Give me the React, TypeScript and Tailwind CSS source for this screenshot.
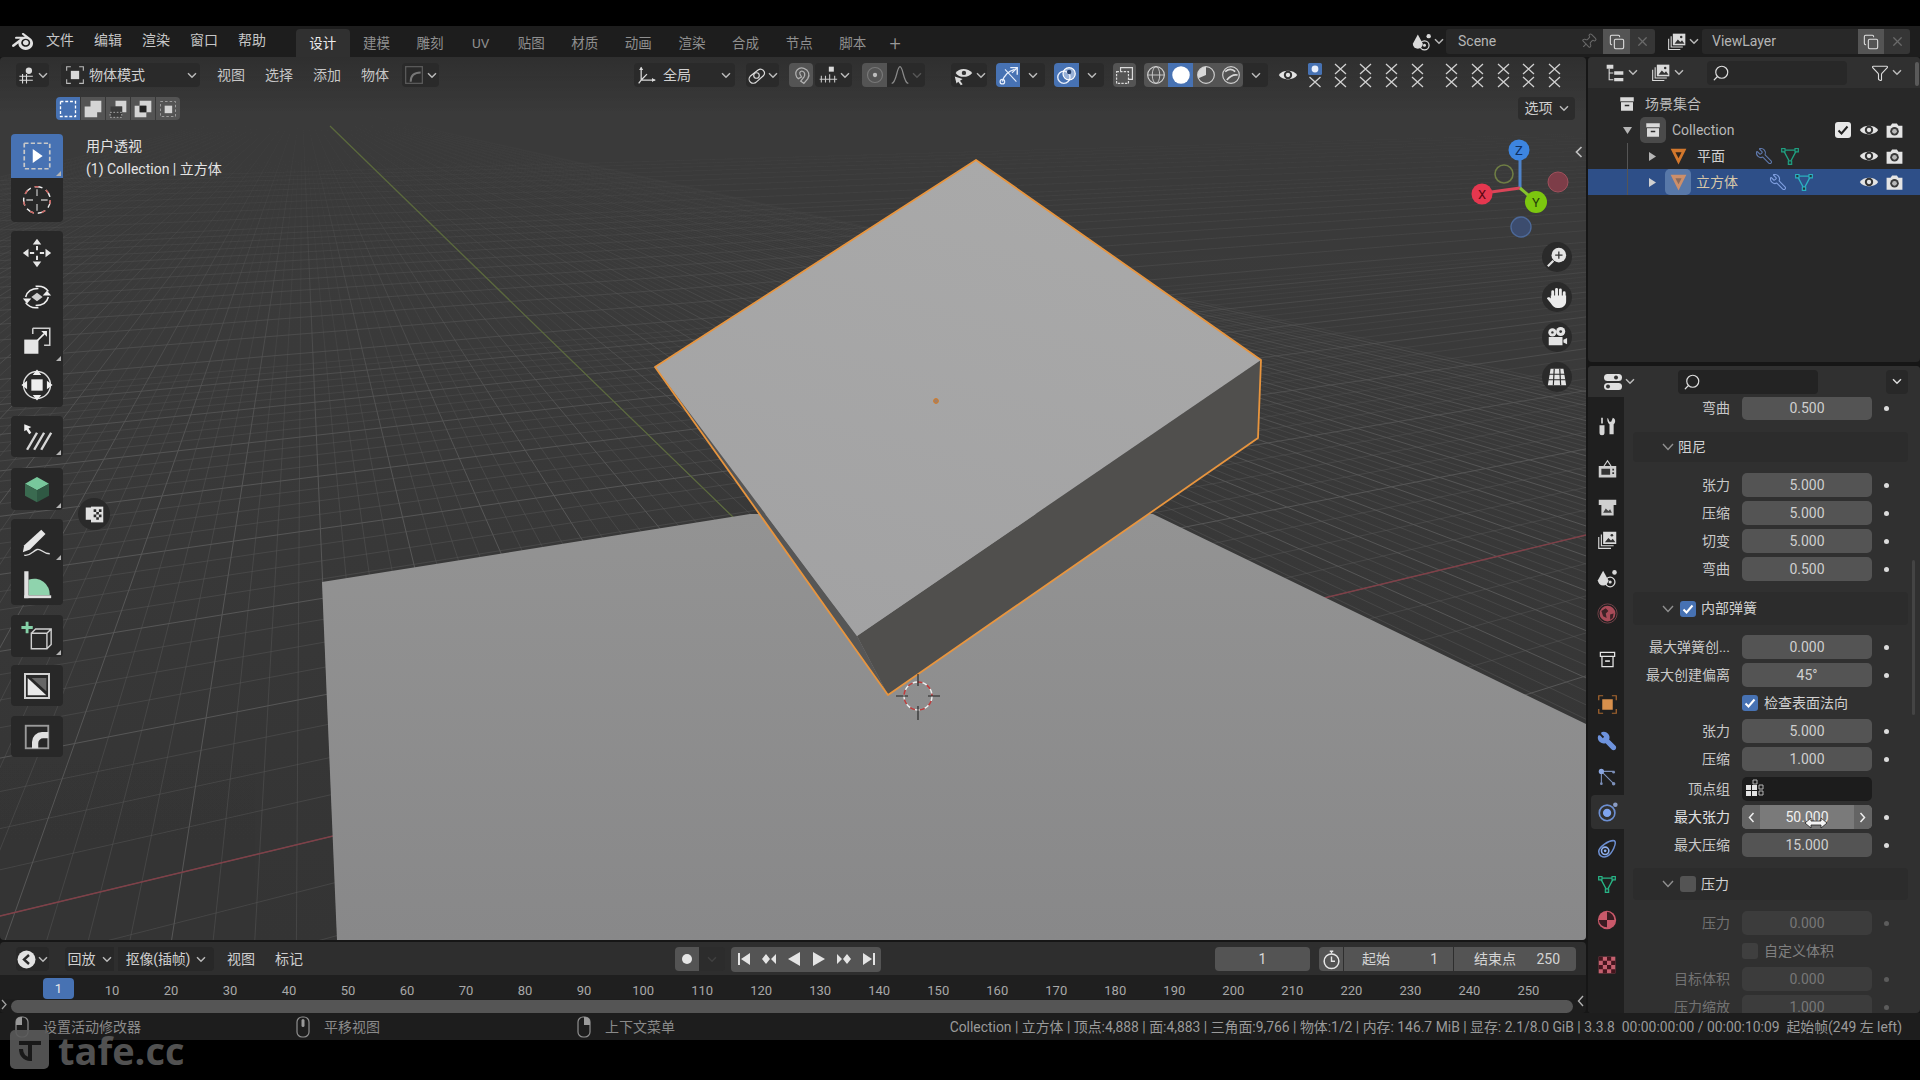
import React from "react";
import { Search, Funnel, Copy, Pin, X, Wrench } from "lucide-react";
import { SiBlender } from "react-icons/si";

const W = "#dadada";
type P = { s?: number; children?: React.ReactNode; className?: string; vb?: number };
const Svg = ({ s = 18, vb = 24, children, className }: P) => (
  <svg width={s} height={s} viewBox={`0 0 ${vb} ${vb}`} fill="none" className={`shrink-0 ${className ?? ""}`}>
    {children}
  </svg>
);
const Chev = ({ c = "#b8b8b8" }: { c?: string }) => (
  <svg width="10" height="7" viewBox="0 0 10 7" fill="none" className="shrink-0">
    <path d="M1 1.2l4 4 4-4" stroke={c} strokeWidth="1.5" />
  </svg>
);
const Tri = ({ c = "#b5b5b5", down = false }: { c?: string; down?: boolean }) => (
  <svg width="9" height="9" viewBox="0 0 9 9" className="shrink-0">
    <path d={down ? "M0 1h9L4.5 8z" : "M1 0l7 4.5L1 9z"} fill={c} />
  </svg>
);
const View3D = () => (
  <Svg s={19}>
    <circle cx="15" cy="6" r="4" fill={W} />
    <path d="M12 10v12M3 13h17M3 18h17M7 10v12" stroke={W} strokeWidth="1.4" />
  </Svg>
);
const ModeObj = () => (
  <Svg s={20}>
    <rect x="7" y="7" width="10" height="10" fill={W} />
    <path d="M2 7V2h5M17 2h5v5M22 17v5h-5M7 22H2v-5" stroke="#bbb" strokeWidth="1.3" />
  </Svg>
);
const Outliner = () => (
  <Svg s={20}>
    <path d="M2 2h8v5H2z" fill={W} />
    <path d="M5 7v13h5M5 12h5" stroke={W} strokeWidth="1.3" />
    <path d="M11 10h11v4H11zM11 18h11v4H11z" fill={W} />
  </Svg>
);
const ViewLayerIc = ({ s = 20 }: { s?: number }) => (
  <Svg s={s}>
    <rect x="7" y="2" width="15" height="14" fill={W} />
    <path d="M9 14l4-5 3 3 2-2 3 4z" fill="#333" />
    <circle cx="17" cy="6" r="1.5" fill="#333" />
    <path d="M5 5v13h14M2 8v13h14" stroke={W} strokeWidth="1.3" />
  </Svg>
);
const SceneIc = ({ s = 20 }: { s?: number }) => (
  <Svg s={s}>
    <path d="M7 3l6 11a5 5 0 01-12 0z" fill={W} />
    <circle cx="20" cy="5" r="2.6" fill={W} />
    <circle cx="15" cy="16" r="5.5" stroke={W} strokeWidth="1.5" />
    <circle cx="15" cy="16" r="1.8" fill={W} />
  </Svg>
);
const Box = ({ s = 18, c = W, dark = "#2a2a2a" }: { s?: number; c?: string; dark?: string }) => (
  <Svg s={s}>
    <path d="M3 3h18v6H3z" fill={c} />
    <path d="M4 9h16v12H4z" fill={c} />
    <path d="M9 13h6v2H9z" fill={dark} />
    <path d="M3 9h18" stroke={dark} strokeWidth="1" />
  </Svg>
);
const BoxOutline = () => (
  <Svg s={19}>
    <path d="M3 3h18v5H3zM5 8v13h14V8" stroke="#e4e4e4" strokeWidth="1.6" />
    <path d="M9 13h6v2H9z" fill="#e4e4e4" />
  </Svg>
);
const MeshObj = ({ dim }: { dim?: boolean }) => (
  <Svg s={21}>
    <path d="M3 3h18L12 21z" fill={dim ? "#e0935f" : "#d2772c"} opacity={dim ? 0.85 : 1} />
    <path d="M8.5 7h7L12 14z" fill={dim ? "#8a6a5a" : "#30241b"} />
  </Svg>
);
const MeshData = ({ c }: { c: string }) => (
  <Svg s={20}>
    <path d="M4 5h16L12 20z" stroke={c} strokeWidth="1.6" />
    <path d="M2 3h4v4H2zM18 3h4v4h-4zM10 18h4v4h-4z" fill="#203a38" stroke={c} strokeWidth="1.4" />
  </Svg>
);
const EyeIc = () => (
  <Svg s={20}>
    <path d="M1 12c4-7 18-7 22 0-4 7-18 7-22 0z" fill="#e4e4e4" />
    <circle cx="12" cy="12" r="5" fill="#333" />
    <circle cx="12" cy="12" r="2.6" fill="#e4e4e4" />
  </Svg>
);
const CamIc = () => (
  <Svg s={19}>
    <path d="M2 6h5l2-3h6l2 3h5v15H2z" fill="#e4e4e4" />
    <circle cx="12" cy="13" r="5.4" fill="#3a3a3a" />
    <circle cx="12" cy="13" r="3" fill="#b8b8b8" />
  </Svg>
);
const Check = ({ on, size = 16, blue }: { on: boolean; size?: number; blue?: boolean }) => (
  <span className={`flex items-center justify-center shrink-0 rounded-[3px] size-[16px] ${blue ? "bg-[#4772b3]" : on ? "bg-[#e8e8e8]" : "bg-[#545454]"}`}>
    {on && (
      <svg width={size - 2} height={size - 2} viewBox="0 0 14 14" fill="none">
        <path d="M2.5 7.5l3 3 6-7" stroke={blue ? "#fff" : "#222"} strokeWidth="2" />
      </svg>
    )}
  </span>
);
const XX = ({ cn }: { cn: string }) => (
  <svg width="13" height="25" viewBox="0 0 13 25" className={`shrink-0 ${cn}`}>
    <path d="M1 1l11 10M12 1L1 11M1 14l11 10M12 14L1 24" stroke="#d0d0d0" strokeWidth="1.3" />
  </svg>
);

const tabs = ["设计", "建模", "雕刻", "UV", "贴图", "材质", "动画", "渲染", "合成", "节点", "脚本"];
const menus = ["文件", "编辑", "渲染", "窗口", "帮助"];

function TopBar() {
  return (
    <div className="h-[31px] bg-[#1d1d1d] flex items-center shrink-0">
      <div className="w-[36px] pl-[12px]">
        <SiBlender size={21} color="#e2e2e2" />
      </div>
      {menus.map((m) => (
        <div key={m} className="w-[48px] text-center text-[14px] text-[#c6c6c6] pb-[2px]">
          {m}
        </div>
      ))}
      <div className="flex self-end h-[28px] ml-[20px]">
        {tabs.map((t, i) => (
          <div key={t} className={`flex items-center justify-center text-[13.5px] rounded-t-[4px] ${t === "UV" ? "w-[47.6px]" : "w-[53.6px]"} ${i === 0 ? "bg-[#303030] text-[#ececec]" : "text-[#8f8f8f]"}`}>
            {t}
          </div>
        ))}
        <div className="ml-[10px] flex items-center text-[20px] font-light text-[#999] leading-none">+</div>
      </div>
      <div className="flex-1" />
      <div className="w-[36px] flex items-center gap-[2px] justify-center">
        <SceneIc />
        <Chev />
      </div>
      <div className="w-[157px] h-[25px] bg-[#282828] flex items-center pl-[12px] pr-[2px] text-[14px] text-[#b5b5b5] rounded-l-[3px] justify-between">
        Scene
        <Pin size={17} strokeWidth={1.5} color="#686868" className="rotate-45 mr-[4px]" />
      </div>
      <div className="w-[27px] h-[25px] bg-[#545454] flex items-center justify-center">
        <Copy size={16} strokeWidth={1.6} color="#e0e0e0" />
      </div>
      <div className="w-[25px] h-[25px] bg-[#363636] flex items-center justify-center rounded-r-[3px]">
        <X size={15} color="#6a6a6a" />
      </div>
      <div className="w-[39px] ml-[8px] flex items-center gap-[2px] justify-center">
        <ViewLayerIc />
        <Chev />
      </div>
      <div className="w-[156px] h-[25px] bg-[#282828] flex items-center pl-[10px] text-[14px] text-[#b5b5b5] rounded-l-[3px]">ViewLayer</div>
      <div className="w-[26px] h-[25px] bg-[#545454] flex items-center justify-center">
        <Copy size={16} strokeWidth={1.6} color="#e0e0e0" />
      </div>
      <div className="w-[26px] h-[25px] bg-[#363636] flex items-center justify-center rounded-r-[3px] mr-[10px]">
        <X size={15} color="#6a6a6a" />
      </div>
    </div>
  );
}

const Scene3D = () => {
  const vp1 = [3494, 77];
  const vp2 = [302, 100];
  const a: { y: number; o: number }[] = [];
  for (let i = -12; i < 160; i++) {
    if (i > 80 && i % 8 !== 0) continue;
    if (i > 30 && i % 4 !== 0) continue;
    a.push({ y: 100 + 816 / (1 + i * 0.06), o: i % 4 === 0 ? 1 : 0.5 });
  }
  const b: { x: number; o: number }[] = [];
  for (let i = -100; i < 70; i++) b.push({ x: 1170 + i * 41.6, o: i % 4 === 0 ? 1 : 0.5 });
  return (
    <svg className="absolute inset-0" width="1586" height="883" viewBox="0 57 1586 883">
      <defs>
        <linearGradient id="pl" x1="0" y1="514" x2="0" y2="940" gradientUnits="userSpaceOnUse">
          <stop offset="0" stopColor="#939393" />
          <stop offset="1" stopColor="#888889" />
        </linearGradient>
        <linearGradient id="tp" x1="976" y1="160" x2="855" y2="637" gradientUnits="userSpaceOnUse">
          <stop offset="0" stopColor="#a9a9a9" />
          <stop offset="1" stopColor="#a2a2a3" />
        </linearGradient>
        <linearGradient id="fd" x1="0" y1="110" x2="0" y2="480" gradientUnits="userSpaceOnUse">
          <stop offset="0" stopColor="#565656" stopOpacity="0" />
          <stop offset="1" stopColor="#565656" stopOpacity="1" />
        </linearGradient>
      </defs>
      {a.map((l, i) => (
        <line key={i} x1={0} y1={l.y} x2={vp1[0]} y2={vp1[1]} stroke="url(#fd)" strokeWidth={1} opacity={l.o} />
      ))}
      {b.map((l, i) => (
        <line key={i} x1={l.x} y1={940} x2={vp2[0]} y2={vp2[1]} stroke="url(#fd)" strokeWidth={1} opacity={l.o} />
      ))}
      <line x1={0} y1={916} x2={1586} y2={535} stroke="#804048" strokeWidth={1.4} />
      <line x1={330} y1={126} x2={735} y2={519} stroke="#5c6b3c" strokeWidth={1.2} />
      <path d="M322 582L750 514H1153L1586 724V940H337z" fill="url(#pl)" />
      <path d="M655 367L857 636 888 695z" fill="#565656" />
      <path d="M1261 360L857 636 888 695 1258 438z" fill="#504f4d" />
      <path d="M976 160L1261 360 857 636 655 367z" fill="url(#tp)" />
      <path d="M976 160L1261 360 1258 438 888 695 655 367z" fill="none" stroke="#e8953e" strokeWidth={1.8} strokeLinejoin="round" />
      <circle cx="936" cy="401" r="2.4" fill="#a0806a" stroke="#d87a20" strokeWidth="1" />
      <ellipse cx="918" cy="696" rx="14" ry="14" fill="none" stroke="#f0f0f0" strokeWidth="1.4" strokeDasharray="5 5" />
      <ellipse cx="918" cy="696" rx="14" ry="14" fill="none" stroke="#c23a3a" strokeWidth="1.4" strokeDasharray="5 5" strokeDashoffset="5" />
      <path d="M918 674v12M918 706v14M896 696h12M928 696h12" stroke="#222" strokeWidth="1.1" />
    </svg>
  );
};

const HBtn = ({ cn, children }: { cn: string; children: React.ReactNode }) => (
  <div className={`h-[24px] flex items-center justify-center shrink-0 ${cn}`}>{children}</div>
);

function ViewHeader() {
  return (
    <div className="flex items-center h-[24px] mt-[6px]">
      <HBtn cn="ml-[16px] w-[33px] gap-[2px] bg-[#2a2a2a] rounded-[4px]">
        <View3D />
        <Chev />
      </HBtn>
      <HBtn cn="ml-[12px] w-[139px] bg-[#2a2a2a] rounded-[4px] pl-[4px] pr-[3px] text-[14px] text-[#cfcfcf]">
        <ModeObj />
        <span className="ml-[4px] flex-1">物体模式</span>
        <Chev />
      </HBtn>
      <div className="ml-[7px] flex">
        {["视图", "选择", "添加", "物体"].map((m) => (
          <div key={m} className="w-[48px] text-center text-[14px] text-[#c6c6c6]">
            {m}
          </div>
        ))}
      </div>
      <HBtn cn="ml-[3px] w-[37px] gap-[3px] bg-[#2a2a2a] rounded-[4px]">
        <Svg s={20}>
          <rect x="2" y="2" width="20" height="20" stroke="#5c5c5c" strokeWidth="1.5" />
          <path d="M8 20c0-7 4-11 12-11" stroke="#777" strokeWidth="2.4" />
        </Svg>
        <Chev />
      </HBtn>
      <HBtn cn="ml-[195px] w-[101px] bg-[#2a2a2a] rounded-[4px] pl-[3px] pr-[4px] text-[14px] text-[#d0d0d0]">
        <Svg s={20}>
          <path d="M5 3v15h17M5 18l-3 4M5 18L12 11" stroke={W} strokeWidth="1.5" />
          <path d="M5 2l-2.5 4h5zM22 18l-4-2.5v5z" fill={W} />
        </Svg>
        <span className="ml-[6px] flex-1">全局</span>
        <Chev />
      </HBtn>
      <HBtn cn="ml-[11px] w-[33px] gap-[2px] bg-[#2a2a2a] rounded-[4px]">
        <Svg s={19}>
          <path d="M14 5a5 5 0 017 7l-9 8a5 5 0 01-8-7z" stroke={W} strokeWidth="1.5" />
          <circle cx="12" cy="12" r="3.5" fill="#2a2a2a" stroke={W} strokeWidth="1.5" />
        </Svg>
        <Chev />
      </HBtn>
      <HBtn cn="ml-[10px] w-[24px] bg-[#545454] rounded-[4px]">
        <Svg s={19}>
          <path d="M6 14C2 6 9 1 15 3c6 2 8 8 5 13l-5 6-4-3 4-5c2-3 1-6-1-7s-5 0-4 3l2 4-4 2z" stroke="#b0b0b0" strokeWidth="1.6" />
        </Svg>
      </HBtn>
      <HBtn cn="ml-[2px] w-[37px] gap-[2px] bg-[#2a2a2a] rounded-[4px]">
        <Svg s={20}>
          <rect x="13" y="2" width="6" height="6" fill={W} />
          <path d="M2 17h21M4 13v8M9 13v8M14 11v10M20 13v8" stroke="#c6c6c6" strokeWidth="1.3" />
        </Svg>
        <Chev />
      </HBtn>
      <HBtn cn="ml-[10px] w-[25px] bg-[#545454] rounded-l-[4px]">
        <Svg s={20}>
          <circle cx="12" cy="12" r="9" stroke="#787878" strokeWidth="1.4" />
          <circle cx="12" cy="12" r="2.6" fill="#bdbdbd" />
        </Svg>
      </HBtn>
      <HBtn cn="w-[38px] gap-[2px] bg-[#2a2a2a] rounded-r-[4px]">
        <Svg s={20}>
          <path d="M2 22c6 0 6-20 10-20s4 20 10 20" stroke="#8a8a8a" strokeWidth="1.5" />
        </Svg>
        <Chev c="#555" />
      </HBtn>
      <HBtn cn="ml-[26px] w-[36px] gap-[2px] bg-[#2a2a2a] rounded-[4px]">
        <Svg s={21}>
          <path d="M3 9c4-6 14-6 19 0-5 6-15 6-19 0z" fill={W} />
          <circle cx="12.5" cy="9" r="2.5" fill="#333" />
          <path d="M2 13l9 3-3 2 3 4-2 1-3-4-2 2z" fill={W} />
        </Svg>
        <Chev />
      </HBtn>
      <HBtn cn="ml-[9px] w-[24px] bg-[#4772b3] rounded-l-[4px]">
        <Svg s={21}>
          <path d="M5 19C7 11 12 7 19 5" stroke="#e6eefb" strokeWidth="1.6" />
          <circle cx="5" cy="19" r="2.6" stroke="#e6eefb" strokeWidth="1.4" />
          <path d="M14 3h8v8M22 3l-6 6" stroke="#e6eefb" strokeWidth="1.6" />
          <path d="M8 5l13 14" stroke="#e6eefb" strokeWidth="1.2" />
        </Svg>
      </HBtn>
      <HBtn cn="w-[25px] bg-[#2a2a2a] rounded-r-[4px]">
        <Chev />
      </HBtn>
      <HBtn cn="ml-[9px] w-[25px] bg-[#4772b3] rounded-l-[4px]">
        <Svg s={21}>
          <circle cx="9" cy="14" r="7" stroke="#e8eefb" strokeWidth="1.6" />
          <circle cx="15" cy="10" r="7" fill="#e8eefb" fillOpacity=".5" stroke="#fff" strokeWidth="1.4" />
          <circle cx="15" cy="8" r="2.5" fill="#26406c" />
        </Svg>
      </HBtn>
      <HBtn cn="w-[25px] bg-[#2a2a2a] rounded-r-[4px]">
        <Chev />
      </HBtn>
      <HBtn cn="ml-[9px] w-[23px] bg-[#545454] rounded-[4px]">
        <Svg s={19}>
          <path d="M7 7V2h15v15h-5" stroke="#dadada" strokeWidth="1.5" />
          <rect x="2" y="7" width="15" height="15" stroke="#dadada" strokeWidth="1.5" strokeDasharray="3 1.5" />
        </Svg>
      </HBtn>
      <div className="ml-[8px] flex h-[24px] shrink-0">
        <HBtn cn="w-[24px] bg-[#545454] rounded-l-[4px]">
          <Svg s={20}>
            <circle cx="12" cy="12" r="10" stroke="#cfcfcf" strokeWidth="1.4" />
            <ellipse cx="12" cy="12" rx="4.5" ry="10" stroke="#cfcfcf" strokeWidth="1.1" />
            <path d="M2 12h20" stroke="#cfcfcf" strokeWidth="1.1" />
          </Svg>
        </HBtn>
        <HBtn cn="w-[25px] bg-[#4772b3]">
          <Svg s={20}>
            <circle cx="12" cy="12" r="10.5" fill="#fff" />
          </Svg>
        </HBtn>
        <HBtn cn="w-[25px] bg-[#545454]">
          <Svg s={20}>
            <circle cx="12" cy="12" r="10" stroke="#cfcfcf" strokeWidth="1.4" />
            <path d="M12 2a10 10 0 00-9 14l9-4z" fill="#d8d8d8" />
          </Svg>
        </HBtn>
        <HBtn cn="w-[25px] bg-[#545454] rounded-r-[4px]">
          <Svg s={20}>
            <circle cx="12" cy="12" r="10" stroke="#cfcfcf" strokeWidth="1.4" />
            <path d="M5 8c5-4 9-3 12 0M7 18c4-5 8-7 13-6" stroke="#d8d8d8" strokeWidth="2" />
          </Svg>
        </HBtn>
      </div>
      <HBtn cn="w-[25px] bg-[#2a2a2a] rounded-r-[4px]">
        <Chev />
      </HBtn>
      <HBtn cn="ml-[9px] w-[22px]">
        <EyeIc />
      </HBtn>
      <svg width="16" height="25" viewBox="0 0 16 25" className="ml-[8px] shrink-0">
        <rect x="1" y="0" width="14" height="12" rx="1.5" fill="#4772b3" />
        <circle cx="8" cy="6" r="3.4" fill="#e8eefb" />
        <path d="M2.5 14l11 10M13.5 14l-11 10" stroke="#d0d0d0" strokeWidth="1.3" />
      </svg>
      <div className="flex items-center">
        <XX cn="ml-[11px]" />
        <XX cn="ml-[12px]" />
        <XX cn="ml-[13px]" />
        <XX cn="ml-[13px]" />
        <XX cn="ml-[21px]" />
        <XX cn="ml-[13px]" />
        <XX cn="ml-[13px]" />
        <XX cn="ml-[12px]" />
        <XX cn="ml-[13px]" />
      </div>
    </div>
  );
}

const SelModes = () => (
  <div className="flex ml-[56px] h-[23px] rounded-[4px] overflow-hidden gap-[1px]">
    <div className="w-[24px] bg-[#4772b3] flex items-center justify-center">
      <Svg s={20}>
        <rect x="3" y="3" width="18" height="18" stroke="#fff" strokeWidth="1.6" strokeDasharray="3.5 2.2" />
      </Svg>
    </div>
    <div className="w-[24px] bg-[#545454] flex items-center justify-center">
      <Svg s={20}>
        <path d="M9 2h13v14h-5v6H2V9h7z" fill="#d4d4d4" />
      </Svg>
    </div>
    <div className="w-[24px] bg-[#545454] flex items-center justify-center">
      <Svg s={20}>
        <path d="M9 2h13v14h-5V9H9z" fill="#d4d4d4" />
        <path d="M3 9h14v13H3z" fill="#3c3c3c" />
        <rect x="2.5" y="16" width="14" height="6" stroke="#bbb" strokeWidth="1" strokeDasharray="2 2" />
      </Svg>
    </div>
    <div className="w-[24px] bg-[#545454] flex items-center justify-center">
      <Svg s={20}>
        <path d="M8 2h14v14h-6V8H8zM2 8h6v8h8v6H2z" fill="#d4d4d4" />
        <path d="M8 8h8v8H8z" fill="#222" />
      </Svg>
    </div>
    <div className="w-[24px] bg-[#545454] flex items-center justify-center">
      <Svg s={20}>
        <rect x="8" y="8" width="9" height="9" fill="#d4d4d4" />
        <rect x="3" y="3" width="18" height="18" stroke="#aaa" strokeWidth="1" strokeDasharray="3 2.5" />
      </Svg>
    </div>
  </div>
);

const Corner = () => <span className="absolute right-[2px] bottom-[2px] border-l-[5px] border-b-[5px] border-l-transparent border-b-[#b4b4b4]" />;

const Tb = ({ cn, children, corner }: { cn: string; children: React.ReactNode; corner?: boolean }) => (
  <div className={`relative w-[52px] flex items-center justify-center ${cn}`}>
    {children}
    {corner && <Corner />}
  </div>
);

function Toolbar() {
  const tb = "bg-[#282828]";
  return (
    <div className="ml-[11px] w-[52px] flex flex-col shrink-0">
      <Tb cn="h-[44px] bg-[#4772b3] rounded-t-[4px]" corner>
        <Svg s={34}>
          <rect x="3" y="3" width="18" height="18" stroke="#c9c9c9" strokeWidth="1.2" strokeDasharray="3 1.6" />
          <path d="M9 7l7 5-7 5z" fill="#fff" />
        </Svg>
      </Tb>
      <Tb cn={`h-[44px] ${tb} rounded-b-[4px]`}>
        <Svg s={32}>
          <circle cx="12" cy="12" r="10" stroke="#eee" strokeWidth="1.1" strokeDasharray="6 3" />
          <circle cx="12" cy="12" r="10" stroke="#c8605c" strokeWidth="1.1" strokeDasharray="3 6" />
          <path d="M12 4v5M12 15v5M4 12h5M15 12h5" stroke="#bbb" strokeWidth="1" />
        </Svg>
      </Tb>
      <Tb cn={`h-[44px] mt-[9px] ${tb} rounded-t-[4px]`}>
        <Svg s={34}>
          <path d="M12 2l3 4H9zM12 22l-3-4h6zM2 12l4-3v6zM22 12l-4 3V9z" fill="#e6e6e6" />
          <path d="M12 7v3M12 14v3M7 12h3M14 12h3" stroke="#e6e6e6" strokeWidth="1.4" />
        </Svg>
      </Tb>
      <Tb cn={`h-[44px] ${tb}`}>
        <Svg s={34}>
          <path d="M12 9l4 3-4 3-4-3z" fill="#cfcfcf" />
          <path d="M4 12c1-4 4-6 9-6M20 12c-1 4-4 6-9 6M4 16c2 3 5 4 9 3.5M20 8c-2-3-5-4-9-3.5" stroke="#eee" strokeWidth="1.1" />
          <path d="M2 13h6l-3 3.5zM22 11h-6l3-3.5z" fill="#eee" />
        </Svg>
      </Tb>
      <Tb cn={`h-[44px] ${tb}`} corner>
        <Svg s={34}>
          <path d="M3 11h10v10H3z" fill="#e6e6e6" />
          <path d="M9 3h12v12h-4M9 3v4" stroke="#ccc" strokeWidth="1.1" />
          <path d="M19 5l-4 0 4 4z" fill="#eee" />
          <path d="M12 12l5-5" stroke="#eee" strokeWidth="1.2" />
        </Svg>
      </Tb>
      <Tb cn={`h-[44px] ${tb} rounded-b-[4px]`}>
        <Svg s={34}>
          <rect x="8" y="8" width="8" height="8" fill="#eee" />
          <circle cx="12" cy="12" r="9.5" stroke="#ddd" strokeWidth="1" />
          <path d="M12 1l3 4H9zM12 23l-3-4h6zM1 12l4-3v6zM23 12l-4 3V9z" fill="#eee" />
        </Svg>
      </Tb>
      <Tb cn={`h-[41px] mt-[9px] ${tb} rounded-[4px]`} corner>
        <Svg s={34}>
          <path d="M5 21L12 9M10 21l7-12M15 21l7-12" stroke="#d6d6d6" strokeWidth="1.7" />
          <path d="M3 3l5 2-2 1 2 3-1.5 1L4.5 7 3 8z" fill="#eee" />
        </Svg>
      </Tb>
      <Tb cn={`h-[42px] mt-[11px] ${tb} rounded-[4px]`} corner>
        <Svg s={32}>
          <path d="M12 3l9 5-9 5-9-5z" fill="#78c79c" />
          <path d="M3 8l9 5v9l-9-5z" fill="#3a6a50" />
          <path d="M21 8l-9 5v9l9-5z" fill="#2f5843" />
        </Svg>
      </Tb>
      <Tb cn={`h-[43px] mt-[9px] ${tb} rounded-t-[4px]`} corner>
        <Svg s={34}>
          <path d="M3 15L15 4l3 3L7 18l-5 2z" fill="#e6e6e6" />
          <path d="M3 22c4 1 6-3 9-4s4 3 9 3" stroke="#ddd" strokeWidth="1" />
        </Svg>
      </Tb>
      <Tb cn={`h-[43px] ${tb} rounded-b-[4px]`}>
        <Svg s={34}>
          <path d="M6 20V9a11 11 0 0115 11z" fill="#8fd3ad" />
          <path d="M3 3h3v19H3z" fill="#e0e0e0" />
          <path d="M3 20h19v2H3z" fill="#e0e0e0" />
        </Svg>
      </Tb>
      <Tb cn={`h-[42px] mt-[10px] ${tb} rounded-[4px]`} corner>
        <Svg s={34}>
          <path d="M8 10h11v11H8zM8 10l3-3h11v11l-3 3M19 10l3-3" stroke="#cfcfcf" strokeWidth="1" />
          <path d="M5 2v8M1 6h8" stroke="#85d1a8" strokeWidth="2" />
        </Svg>
      </Tb>
      <Tb cn={`h-[41px] mt-[8px] ${tb} rounded-[4px]`}>
        <Svg s={32}>
          <rect x="3" y="3" width="18" height="18" stroke="#d2d2d2" strokeWidth="1.5" />
          <path d="M5 6l14 13H5z" fill="#eaeaea" />
          <path d="M8 6h11v10" fill="#666" />
        </Svg>
      </Tb>
      <Tb cn={`h-[41px] mt-[10px] ${tb} rounded-[4px]`}>
        <Svg s={30}>
          <rect x="3" y="3" width="18" height="18" stroke="#9a9a9a" strokeWidth="1.5" />
          <path d="M8 21v-5a8 8 0 018-8h5v5h-4a4 4 0 00-4 4v4z" fill="#e0e0e0" />
        </Svg>
      </Tb>
    </div>
  );
}

const Round = ({ children }: { children: React.ReactNode }) => (
  <div className="size-[30px] rounded-full bg-[#2a2a2a] flex items-center justify-center mb-[10px]">{children}</div>
);

function Gizmo() {
  return (
    <svg className="absolute left-[1460px] top-[73px]" width="120" height="110" viewBox="1460 130 120 110">
      <circle cx="1558" cy="182" r="10" fill="#7d3d48" stroke="#a0505c" strokeWidth="1" />
      <circle cx="1504" cy="174" r="9" fill="none" stroke="#6e7d44" strokeWidth="1.6" />
      <circle cx="1521" cy="227" r="10" fill="#3c4c6e" stroke="#4c6898" strokeWidth="1.4" />
      <path d="M1520 188v-36" stroke="#4f83c9" strokeWidth="3" />
      <path d="M1520 188l-36 5" stroke="#d94558" strokeWidth="3" />
      <path d="M1520 188l14 12" stroke="#86c32d" strokeWidth="3" />
      <circle cx="1519" cy="150" r="10.5" fill="#3d85e0" />
      <circle cx="1482" cy="194" r="10.5" fill="#e5374f" />
      <circle cx="1536" cy="202" r="11" fill="#7cc70f" />
      <text x="1519" y="155" textAnchor="middle" fontSize="13" fill="#0e2f62" fontFamily="Roboto">Z</text>
      <text x="1482" y="199" textAnchor="middle" fontSize="13" fill="#5c0612" fontFamily="Roboto">X</text>
      <text x="1536" y="207" textAnchor="middle" fontSize="13" fill="#254008" fontFamily="Roboto">Y</text>
    </svg>
  );
}

function Viewport() {
  return (
    <div className="relative h-[883px] rounded-[4px] overflow-hidden bg-[linear-gradient(to_bottom,#2f2f2f,#3b3b3b_60px,#3a3a3a_300px,#343434)]">
      <Scene3D />
      <div className="relative flex flex-col">
        <ViewHeader />
        <div className="flex items-center justify-between mt-[10px] h-[23px]">
          <SelModes />
          <div className="w-[57px] h-[23px] mr-[11px] bg-[#2c2c2c] rounded-[4px] flex items-center justify-center gap-[6px] text-[14px] text-[#cfcfcf]">
            选项
            <Chev />
          </div>
        </div>
        <div className="flex mt-[14px]">
          <Toolbar />
          <div className="ml-[23px] mt-[1px] text-[14px] leading-[23px] text-[#e4e4e4]">
            <div>用户透视</div>
            <div>(1) Collection | 立方体</div>
          </div>
        </div>
      </div>
      <div className="absolute left-[78px] top-[441px] size-[32px] rounded-full bg-[#2a2a2a] flex items-center justify-center">
        <Svg s={21}>
          <path d="M2 4h6v14H2z" fill="#e0e0e0" />
          <path d="M8 3h14v18H8z" fill="#e0e0e0" />
          <path d="M11 6h3v3h-3zM17 6h3v3h-3zM14 9h3v3h-3zM11 12h3v3h-3zM17 12h3v3h-3zM14 15h3v3h-3z" fill="#2a2a2a" />
        </Svg>
      </div>
      <Gizmo />
      <div className="absolute left-[1572px] top-[83px] h-[24px] w-[14px] flex items-center justify-center">
        <svg width="8" height="12" viewBox="0 0 8 12" fill="none">
          <path d="M6.5 1L1.5 6l5 5" stroke="#c0c0c0" strokeWidth="1.7" />
        </svg>
      </div>
      <div className="absolute left-[1542px] top-[185px] flex flex-col">
        <Round>
          <Svg s={22}>
            <circle cx="14" cy="10" r="8" fill="#e4e4e4" />
            <path d="M14 6v8M10 10h8" stroke="#333" strokeWidth="1.4" />
            <path d="M8 16l-6 6" stroke="#e4e4e4" strokeWidth="2.4" />
          </Svg>
        </Round>
        <Round>
          <Svg s={23}>
            <path d="M7 13V6M11 12V3.5M15 12V4M19 13V7" stroke="#ececec" strokeWidth="3" strokeLinecap="round" />
            <path d="M5 10h16v6c0 4-3 7-7 7h-2c-3 0-5-2-7-5l-4-5c1-2 3-1 4 0z" fill="#ececec" />
          </Svg>
        </Round>
        <Round>
          <Svg s={22}>
            <circle cx="7" cy="7" r="4.5" fill="#e4e4e4" />
            <circle cx="16" cy="6" r="5" fill="#e4e4e4" />
            <circle cx="7" cy="7" r="1.3" fill="#333" />
            <circle cx="16" cy="6" r="1.5" fill="#333" />
            <path d="M3 12h15v9H3zM19 15l4-2v7l-4-2z" fill="#e4e4e4" />
          </Svg>
        </Round>
        <Round>
          <Svg s={22}>
            <path d="M5 3h14l3 18H2z" fill="#e4e4e4" />
            <path d="M3 9h18M2.5 15h19M9 3l-1 18M15 3l1 18" stroke="#2a2a2a" strokeWidth="1.3" />
          </Svg>
        </Round>
      </div>
    </div>
  );
}

const ticks = ["10", "20", "30", "40", "50", "60", "70", "80", "90", "100", "110", "120", "130", "140", "150", "160", "170", "180", "190", "200", "210", "220", "230", "240", "250"];

const Pb = ({ d }: { d: string }) => (
  <div className="w-[25px] h-[25px] flex items-center justify-center bg-[#545454]">
    <svg width="18" height="18" viewBox="0 0 18 18">
      <path d={d} fill="#e4e4e4" />
    </svg>
  </div>
);

function Timeline() {
  return (
    <div className="h-[71px] mt-[2px] flex flex-col rounded-[4px] overflow-hidden">
      <div className="h-[33px] bg-[#2e2e2e] flex items-center text-[14px] text-[#cfcfcf] shrink-0 pt-[1px]">
        <HBtn cn="ml-[16px] w-[33px] gap-[2px] bg-[#282828] rounded-[4px]">
          <svg width="19" height="19" viewBox="0 0 19 19">
            <circle cx="9.5" cy="9.5" r="9" fill="#e2e2e2" />
            <path d="M12 5l-5 4.5 5 4.5" stroke="#2a2a2a" strokeWidth="2.4" fill="none" />
          </svg>
          <Chev />
        </HBtn>
        <HBtn cn="ml-[16px] w-[49px] bg-[#282828] rounded-l-[4px] gap-[6px]">
          回放
          <Chev />
        </HBtn>
        <HBtn cn="ml-[4px] w-[96px] bg-[#282828] rounded-r-[4px] gap-[6px]">
          <span className="tracking-[-0.2px]">抠像(插帧)</span>
          <Chev />
        </HBtn>
        <div className="ml-[3px] w-[48px] text-center">视图</div>
        <div className="w-[48px] text-center">标记</div>
        <HBtn cn="ml-[362px] w-[24px] bg-[#545454] rounded-l-[4px]">
          <span className="size-[10px] rounded-full bg-[#e6e6e6]" />
        </HBtn>
        <HBtn cn="w-[26px] bg-[#2c2c2c] rounded-r-[4px]">
          <Chev c="#3f3f3f" />
        </HBtn>
        <div className="ml-[6px] flex rounded-[4px] overflow-hidden">
          <Pb d="M3 3h2v12H3zM15 3v12L6 9z" />
          <Pb d="M2 9l4-5 4 5-4 5zM16 4v10l-5-5z" />
          <Pb d="M15 2v14L3 9z" />
          <Pb d="M3 2v14l12-7z" />
          <Pb d="M2 4l5 5-5 5zM12 4l4 5-4 5-4-5z" />
          <Pb d="M3 3v12l9-6zM13 3h2v12h-2z" />
        </div>
        <HBtn cn="ml-[334px] w-[95px] bg-[#545454] rounded-[4px] text-[#d8d8d8]">1</HBtn>
        <HBtn cn="ml-[9px] w-[24px] bg-[#545454] rounded-l-[4px]">
          <Svg s={21}>
            <circle cx="12" cy="14" r="8.4" stroke="#e6e6e6" strokeWidth="1.7" />
            <path d="M12 8.5V14h4M10 2.5h4M12 2.5V5" stroke="#e6e6e6" strokeWidth="1.6" />
          </Svg>
        </HBtn>
        <HBtn cn="ml-[1px] w-[109px] bg-[#545454] pl-[18px] pr-[15px] text-[#d4d4d4]">
          <span className="flex-1">起始</span>
          <span>1</span>
        </HBtn>
        <HBtn cn="ml-[1px] w-[122px] bg-[#545454] rounded-r-[4px] pl-[20px] pr-[16px] text-[#d4d4d4]">
          <span className="flex-1">结束点</span>
          <span>250</span>
        </HBtn>
      </div>
      <div className="h-[24px] bg-[#1f1f1f] relative flex items-center text-[13px] text-[#a8a8a8] shrink-0 pt-[7px]">
        <div className="flex ml-[82.5px]">
          {ticks.map((t) => (
            <div key={t} className="w-[59.03px] text-center">
              {t}
            </div>
          ))}
        </div>
        <div className="absolute left-[43px] top-[3px] w-[31px] h-[21px] bg-[#4772b3] rounded-[4px] flex items-center justify-center text-[#e8e8e8]">1</div>
      </div>
      <div className="h-[14px] bg-[#1d1d1d] flex items-center relative">
        <span className="absolute left-[1px] top-0">
          <svg width="7" height="11" viewBox="0 0 7 11" fill="none">
            <path d="M1 1l4 4.5-4 4.5" stroke="#a0a0a0" strokeWidth="1.3" />
          </svg>
        </span>
        <div className="ml-[11px] w-[1562px] h-[13px] bg-[#555555] rounded-full" />
        <span className="absolute right-[1px] -top-[5px]">
          <svg width="8" height="14" viewBox="0 0 8 14" fill="none">
            <path d="M6 2L1.5 7 6 12" stroke="#b0b0b0" strokeWidth="1.4" />
          </svg>
        </span>
      </div>
    </div>
  );
}

function OutlinerPanel() {
  return (
    <div className="h-[305px] bg-[#282828] rounded-[4px] overflow-hidden flex flex-col relative">
      <div className="h-[31px] bg-[#303030] flex items-center shrink-0">
        <HBtn cn="ml-[14px] w-[38px] gap-[3px]">
          <Outliner />
          <Chev />
        </HBtn>
        <HBtn cn="ml-[8px] w-[38px] gap-[3px]">
          <ViewLayerIc />
          <Chev />
        </HBtn>
        <div className="ml-[21px] w-[140px] h-[24px] bg-[#282828] rounded-[4px] flex items-center pl-[5px]">
          <Search size={18} color="#dcdcdc" strokeWidth={1.6} className="-scale-x-100" />
        </div>
        <HBtn cn="ml-[19px] w-[40px] gap-[3px]">
          <Funnel size={18} color="#dcdcdc" strokeWidth={1.5} />
          <Chev />
        </HBtn>
      </div>
      <div className="absolute right-[1px] top-[5px] w-[4px] h-[24px] bg-[#5a5a5a] rounded" />
      <div className="pt-[3px] flex flex-col text-[14px] relative">
        <div className="h-[26px] flex items-center text-[#bdbdbd]">
          <span className="ml-[30px] w-[27px]">
            <Box />
          </span>
          场景集合
        </div>
        <div className="h-[26px] flex items-center text-[#b8b8b8]">
          <span className="ml-[35px] w-[12px]">
            <Tri down />
          </span>
          <span className="ml-[5px] size-[26px] bg-[#4a4a4a] rounded-[5px] flex items-center justify-center">
            <Box />
          </span>
          <span className="ml-[6px]">Collection</span>
          <span className="ml-auto flex items-center">
            <Check on />
            <span className="ml-[8px]"><EyeIc /></span>
            <span className="ml-[6px] mr-[16px]"><CamIc /></span>
          </span>
        </div>
        <div className="h-[26px] flex items-center text-[#d0d0d0]">
          <span className="ml-[60px] w-[12px]">
            <Tri />
          </span>
          <span className="ml-[8px]"><MeshObj /></span>
          <span className="ml-[8px] w-[28px]">平面</span>
          <span className="ml-[30px]"><Wrench size={18} color="#5f79ad" strokeWidth={1.5} className="-scale-x-100" /></span>
          <span className="ml-[7px]"><MeshData c="#20a080" /></span>
          <span className="ml-auto flex items-center">
            <EyeIc />
            <span className="ml-[6px] mr-[16px]"><CamIc /></span>
          </span>
        </div>
        <div className="h-[26px] flex items-center bg-[#2e4f88] text-[#d8c8a8]">
          <span className="ml-[60px] w-[12px]">
            <Tri c="#d0d0d0" />
          </span>
          <span className="ml-[5px] size-[26px] bg-[#5878a8] rounded-[5px] flex items-center justify-center">
            <MeshObj dim />
          </span>
          <span className="ml-[5px] w-[42px]">立方体</span>
          <span className="ml-[31px]"><Wrench size={18} color="#7f9fe0" strokeWidth={1.5} className="-scale-x-100" /></span>
          <span className="ml-[7px]"><MeshData c="#2bb0c0" /></span>
          <span className="ml-auto flex items-center">
            <EyeIc />
            <span className="ml-[6px] mr-[16px]"><CamIc /></span>
          </span>
        </div>
        <div className="absolute left-[39px] top-[55px] h-[52px] w-[1px] bg-[#555]" />
      </div>
    </div>
  );
}

const Row = ({ label, val, dim, cn = "" }: { label: string; val: string; dim?: boolean; cn?: string }) => (
  <div className={`h-[28px] flex items-center shrink-0 ${cn}`}>
    <div className={`w-[106px] text-right text-[14px] whitespace-nowrap ${dim ? "text-[#737373]" : "text-[#c8c8c8]"}`}>{label}</div>
    <div className={`ml-[12px] w-[130px] h-[24px] rounded-[5px] flex items-center justify-center text-[14px] ${dim ? "bg-[#3c3c3c] text-[#777]" : "bg-[#545454] text-[#cfcfcf]"}`}>{val}</div>
    <span className={`ml-[12px] size-[5px] rounded-full ${dim ? "bg-[#5c5c5c]" : "bg-[#dcdcdc]"}`} />
  </div>
);

const PanelHead = ({ cn, children }: { cn: string; children: React.ReactNode }) => (
  <div className={`ml-[9px] w-[275px] rounded-[4px] bg-[#2c2c2c] flex items-center text-[14px] text-[#d2d2d2] shrink-0 ${cn}`}>
    <span className="ml-[29px] w-[12px] flex">
      <svg width="12" height="8" viewBox="0 0 12 8" fill="none">
        <path d="M1 1l5 5.5L11 1" stroke="#909090" strokeWidth="1.4" />
      </svg>
    </span>
    {children}
  </div>
);

const PTab = ({ cn, children }: { cn: string; children: React.ReactNode }) => (
  <div className={`h-[30px] flex items-center justify-center shrink-0 ${cn}`}>{children}</div>
);

function PropTabs() {
  return (
    <div className="w-[36px] pl-[2px] bg-[#1f1f1f] flex flex-col shrink-0">
      <PTab cn="mt-[14px]">
        <Svg s={20}>
          <path d="M5 2h2v7H5zM3 11h6v9a3 3 0 01-6 0z" fill="#d6d6d6" />
          <path d="M13 2l2 5h2l2-5c3 1 4 5 1 8v12h-5V10c-3-3-3-7-2-8z" fill="#d6d6d6" />
        </Svg>
      </PTab>
      <PTab cn="mt-[13px]">
        <Svg s={21}>
          <path d="M2 8h20v13H2z" fill="#cfcfcf" />
          <path d="M8 8l4-6 4 6" stroke="#cfcfcf" strokeWidth="1.4" />
          <path d="M5 11h10v7H5z" fill="#333" />
          <path d="M17.5 11h2v2h-2zM17.5 15h2v2h-2z" fill="#333" />
        </Svg>
      </PTab>
      <PTab cn="mt-[8px]">
        <Svg s={21}>
          <path d="M2 3h20v6H2zM5 9h14v12H5z" fill="#cfcfcf" />
          <path d="M7 18l3-5 3 3 2-2 2 4z" fill="#444" />
        </Svg>
      </PTab>
      <PTab cn="mt-[3px]"><ViewLayerIc s={21} /></PTab>
      <PTab cn="mt-[8px]"><SceneIc s={21} /></PTab>
      <PTab cn="mt-[5px]">
        <Svg s={21}>
          <circle cx="12" cy="12" r="9" fill="#a84b58" />
          <path d="M5 9l5-3 3 3-3 3 1 5-4-2zM15 13l4-1-1 5-3 2z" fill="#3c2226" />
          <circle cx="12" cy="12" r="11" stroke="#79434c" strokeWidth="1" />
        </Svg>
      </PTab>
      <PTab cn="mt-[16px]"><BoxOutline /></PTab>
      <PTab cn="mt-[15px]">
        <Svg s={21}>
          <rect x="6" y="6" width="12" height="12" fill="#d8904c" />
          <path d="M2 7V2h5M17 2h5v5M22 17v5h-5M7 22H2v-5" stroke="#a8672f" strokeWidth="1.4" />
        </Svg>
      </PTab>
      <PTab cn="mt-[7px]">
        <Wrench size={20} color="#6e93dd" fill="#6e93dd" className="-scale-x-100" />
      </PTab>
      <PTab cn="mt-[6px]">
        <Svg s={21}>
          <path d="M5 5l14 14M5 5h15M5 5v15" stroke="#7c8fb8" strokeWidth="1.3" />
          <circle cx="5" cy="5" r="3" fill="#8aa6e0" />
          <circle cx="19" cy="6" r="1.5" fill="#7c8fb8" />
          <circle cx="5" cy="19" r="1.5" fill="#7c8fb8" />
          <circle cx="19" cy="19" r="2" fill="#7c8fb8" />
        </Svg>
      </PTab>
      <div className="mt-[3px] h-[34px] ml-[1px] rounded-l-[4px] bg-[#303030] flex items-center justify-center shrink-0">
        <Svg s={22}>
          <circle cx="11" cy="13" r="8.5" stroke="#6c8ed0" strokeWidth="1.8" />
          <circle cx="11" cy="13" r="4.5" fill="#7fa4ee" />
          <circle cx="20" cy="4" r="2.5" fill="#8a9cc4" />
        </Svg>
      </div>
      <PTab cn="mt-[5px]">
        <Svg s={22}>
          <path d="M3 15c0-5 11-13 17-12 3 2-2 14-8 17-5 2-9-1-9-5z" stroke="#6c8ed0" strokeWidth="1.7" />
          <circle cx="10" cy="14" r="4" stroke="#8fb0ee" strokeWidth="1.8" />
          <circle cx="10" cy="14" r="1.5" fill="#8fb0ee" />
        </Svg>
      </PTab>
      <PTab cn="mt-[5px]"><MeshData c="#28b585" /></PTab>
      <PTab cn="mt-[6px]">
        <Svg s={22}>
          <circle cx="12" cy="12" r="10" fill="#c9596a" />
          <path d="M12 3a9 9 0 018 9l-8 0zM12 12h-9a9 9 0 009 8z" fill="#3a1c22" />
        </Svg>
      </PTab>
      <PTab cn="mt-[15px]">
        <Svg s={20}>
          <rect x="2" y="2" width="20" height="20" fill="#c4606f" />
          <path d="M2 2h5v5H2zM12 2h5v5h-5zM7 7h5v5H7zM17 7h5v5h-5zM2 12h5v5H2zM12 12h5v5h-5zM7 17h5v5H7zM17 17h5v5h-5z" fill="#45151e" />
        </Svg>
      </PTab>
    </div>
  );
}

function Properties() {
  return (
    <div className="flex-1 mt-[4px] bg-[#303030] rounded-[4px] overflow-hidden flex flex-col relative">
      <div className="h-[31px] bg-[#303030] flex items-center shrink-0">
        <HBtn cn="ml-[12px] w-[38px] gap-[2px]">
          <svg width="20" height="20" viewBox="0 0 20 20">
            <rect x="1" y="2" width="18" height="7" rx="3.5" fill="#e0e0e0" />
            <rect x="1" y="11" width="18" height="7" rx="3.5" fill="#e0e0e0" />
            <circle cx="13" cy="5.5" r="2" fill="#333" />
            <circle cx="5" cy="14.5" r="2" fill="#333" />
          </svg>
          <Chev />
        </HBtn>
        <div className="ml-[40px] w-[140px] h-[24px] bg-[#232323] rounded-[4px] flex items-center pl-[5px]">
          <Search size={18} color="#dcdcdc" strokeWidth={1.6} className="-scale-x-100" />
        </div>
        <HBtn cn="ml-[68px] w-[22px] bg-[#282828] rounded-[4px]">
          <Chev c="#dadada" />
        </HBtn>
      </div>
      <div className="flex flex-1 min-h-0">
        <PropTabs />
        <div className="flex-1 flex flex-col overflow-hidden relative">
          <Row label="弯曲" val="0.500" cn="-mt-[3px]" />
          <PanelHead cn="mt-[10px] h-[30px]">
            <span className="ml-[4px]">阻尼</span>
          </PanelHead>
          <Row label="张力" val="5.000" cn="mt-[9px]" />
          <Row label="压缩" val="5.000" />
          <Row label="切变" val="5.000" />
          <Row label="弯曲" val="0.500" />
          <PanelHead cn="mt-[9px] h-[33px]">
            <span className="ml-[6px] flex items-center gap-[5px]">
              <Check on blue />
              内部弹簧
            </span>
          </PanelHead>
          <Row label="最大弹簧创..." val="0.000" cn="mt-[8px]" />
          <Row label="最大创建偏离" val="45°" />
          <div className="h-[28px] flex items-center pl-[118px] text-[14px] text-[#d0d0d0] shrink-0 gap-[6px]">
            <Check on blue />
            检查表面法向
          </div>
          <Row label="张力" val="5.000" />
          <Row label="压缩" val="1.000" />
          <div className="h-[28px] mt-[2px] flex items-center shrink-0">
            <div className="w-[106px] text-right text-[14px] text-[#c8c8c8]">顶点组</div>
            <div className="ml-[12px] w-[130px] h-[24px] rounded-[5px] bg-[#1c1c1c] flex items-center pl-[3px]">
              <svg width="20" height="20" viewBox="0 0 20 20">
                <path d="M1 6h5v5H1zM7 6h5v5H7zM1 12h5v5H1zM7 12h5v5H7z" fill="#e4e4e4" />
                <path d="M8 1h4v4H8zM14 6h4v4h-4zM14 12h4v4h-4z" stroke="#b4b4b4" strokeWidth="1" fill="none" />
              </svg>
            </div>
          </div>
          <div className="h-[28px] flex items-center shrink-0">
            <div className="w-[106px] text-right text-[14px] text-[#e0e0e0]">最大张力</div>
            <div className="ml-[12px] w-[130px] h-[24px] rounded-[5px] bg-[#7a7a7a] flex items-center justify-between text-[14px] text-[#f0f0f0] overflow-hidden">
              <span className="w-[18px] h-full bg-[#646464] flex items-center justify-center">
                <svg width="7" height="11" viewBox="0 0 7 11" fill="none"><path d="M5.5 1L1.5 5.5l4 4.5" stroke="#eee" strokeWidth="1.5" /></svg>
              </span>
              50.000
              <span className="w-[18px] h-full bg-[#646464] flex items-center justify-center">
                <svg width="7" height="11" viewBox="0 0 7 11" fill="none"><path d="M1.5 1l4 4.5-4 4.5" stroke="#eee" strokeWidth="1.5" /></svg>
              </span>
            </div>
            <span className="ml-[12px] size-[5px] rounded-full bg-[#dcdcdc]" />
          </div>
          <Row label="最大压缩" val="15.000" />
          <PanelHead cn="mt-[9px] h-[32px]">
            <span className="ml-[6px] flex items-center gap-[5px]">
              <Check on={false} />
              压力
            </span>
          </PanelHead>
          <Row label="压力" val="0.000" dim cn="mt-[9px]" />
          <div className="h-[28px] flex items-center pl-[118px] text-[14px] text-[#808080] shrink-0 gap-[6px]">
            <span className="size-[16px] rounded-[3px] bg-[#3f3f3f]" />
            自定义体积
          </div>
          <Row label="目标体积" val="0.000" dim />
          <Row label="压力缩放" val="1.000" dim />
          <div className="absolute right-[5px] top-[163px] w-[3px] h-[155px] bg-[#444] rounded" />
        </div>
      </div>
      <svg className="absolute left-[216px] top-[450px]" width="24" height="14" viewBox="0 0 24 14">
        <path d="M1 7l6-5v3h10V2l6 5-6 5V9H7v3z" fill="#f4f4f4" stroke="#222" strokeWidth="0.8" />
      </svg>
    </div>
  );
}

const MouseIc = ({ part }: { part: "l" | "m" | "r" }) => (
  <svg width="14" height="22" viewBox="0 0 14 22" fill="none" className="shrink-0">
    <rect x="1" y="1" width="12" height="20" rx="5" stroke="#8f8f8f" strokeWidth="1.2" />
    {part === "l" && <path d="M1 9V6a5 5 0 015-5h1v8z" fill="#9a9a9a" />}
    {part === "r" && <path d="M13 9V6a5 5 0 00-5-5H7v8z" fill="#9a9a9a" />}
    {part === "m" && <rect x="5.5" y="3" width="3" height="8" rx="1.5" fill="#9a9a9a" />}
  </svg>
);

function StatusBar() {
  return (
    <div className="h-[27px] bg-[#1d1d1d] flex items-center text-[14px] text-[#8a8a8a] shrink-0 pt-[1px]">
      <span className="ml-[15px]"><MouseIc part="l" /></span>
      <span className="ml-[14px]">设置活动修改器</span>
      <span className="ml-[155px]"><MouseIc part="m" /></span>
      <span className="ml-[14px]">平移视图</span>
      <span className="ml-[197px]"><MouseIc part="r" /></span>
      <span className="ml-[14px]">上下文菜单</span>
      <span className="ml-auto mr-[18px] text-[13.9px] whitespace-pre text-[#9a9a9a]">Collection | 立方体 | 顶点:4,888 | 面:4,883 | 三角面:9,766 | 物体:1/2 | 内存: 146.7 MiB | 显存: 2.1/8.0 GiB | 3.3.8  00:00:00:00 / 00:00:10:09  起始帧(249 左 left)</span>
    </div>
  );
}

export default function App() {
  return (
    <div className="w-[1920px] h-[1080px] bg-black overflow-hidden relative flex flex-col font-[family-name:Roboto,'Noto_Sans_CJK_SC',sans-serif]">
      <div className="h-[26px] shrink-0" />
      <TopBar />
      <div className="h-[956px] flex bg-[#161616] shrink-0">
        <div className="w-[1586px] flex flex-col shrink-0">
          <Viewport />
          <Timeline />
        </div>
        <div className="w-[332px] ml-[2px] flex flex-col">
          <OutlinerPanel />
          <Properties />
        </div>
      </div>
      <StatusBar />
      <div className="absolute left-[10px] top-[1030px] flex items-center opacity-90">
        <div className="size-[39px] rounded-[5px] bg-[#5a5a5a] flex items-center justify-center">
          <svg width="30" height="30" viewBox="0 0 30 30" fill="none">
            <path d="M4 8h22M15 8v18M6 14c0 6 4 10 9 10" stroke="#1c1c1c" strokeWidth="4" />
          </svg>
        </div>
        <span className="ml-[9px] text-[38px] leading-[20px] font-bold text-[#5a5a5a] font-[family-name:'Open_Sans',sans-serif]">tafe.cc</span>
      </div>
    </div>
  );
}
